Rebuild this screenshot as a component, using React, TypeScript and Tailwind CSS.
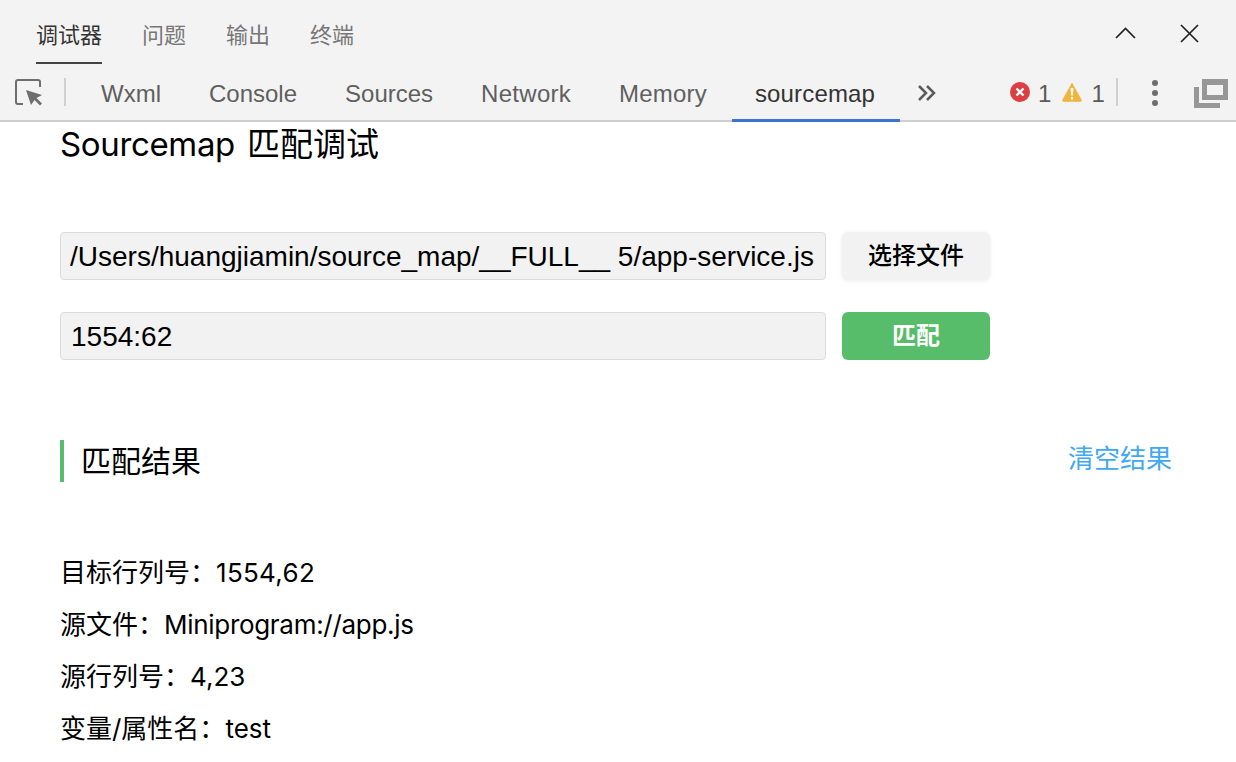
const sans = "font-['Liberation_Sans','Noto_Sans_CJK_SC',sans-serif]";
const pingfang = "font-['Inter','Noto_Sans_CJK_SC',sans-serif]";

const topTabs = ["调试器", "问题", "输出", "终端"];
const panelTabs = [
  { label: "Wxml", cls: "pr-[24px]" },
  { label: "Console", cls: "pr-[24px]" },
  { label: "Sources", cls: "pr-[24px]" },
  { label: "Network", cls: "pr-[24px] tracking-[0.28px]" },
  { label: "Memory", cls: "pr-[25px] tracking-[0.2px]" },
];
const results = [
  { label: "目标行列号：", value: "1554,62", cls: "tracking-[0.3px]" },
  { label: "源文件：", value: "Miniprogram://app.js", cls: "tracking-[-0.3px]" },
  { label: "源行列号：", value: "4,23", cls: "" },
  { label: "变量/属性名：", value: "test", cls: "" },
];

function InspectIcon() {
  return (
    <svg width="28" height="28" viewBox="0 0 28 28" fill="none">
      <path d="M8 26H3a2 2 0 0 1-2-2V4a2 2 0 0 1 2-2h20a2 2 0 0 1 2 2v5" stroke="#6e6e6e" strokeWidth="2" />
      <path d="M11 12L27 17L21.500 20L27 25.500L25 27.500L19.500 22L16 27z" fill="#6e6e6e" />
    </svg>
  );
}

function Toolbar() {
  return (
    <div className="flex h-[58px] items-stretch border-b-2 border-[#cfcfcf] pl-[15px]">
      <div className="flex w-[36px] items-center">
        <InspectIcon />
      </div>
      <div className="my-[14px] ml-[13px] mr-[11px] w-[2px] bg-[#d0d0d0]" />
      <div className="flex">
        {panelTabs.map((t) => (
          <div key={t.label} className={`flex items-center pl-[24px] pt-[4px] text-[24px] text-[#5f5f5f] ${t.cls}`}>
            {t.label}
          </div>
        ))}
        <div className="mb-[-2px] flex items-center border-b-[3px] border-[#3f73d0] pl-[23px] pr-[25px] pt-[5px] text-[24px] tracking-[0.15px] text-[#333]">
          sourcemap
        </div>
      </div>
      <div className="ml-[17px] flex items-center pt-[2px]">
        <svg width="20" height="20" viewBox="0 0 20 20" fill="none" stroke="#5a5a5a" strokeWidth="2.500">
          <path d="M2 3l7 7-7 7M10 3l7 7-7 7" />
        </svg>
      </div>
      <div className="ml-[73px] flex items-center text-[24px] text-[#5a5a5a]">
        <svg width="20" height="20" viewBox="0 0 20 20">
          <circle cx="10" cy="10" r="10" fill="#dc3f42" />
          <path d="M6.500 6.500l7 7M13.500 6.500l-7 7" stroke="#fff" strokeWidth="2.400" />
        </svg>
        <span className="ml-[8px] pt-[4px]">1</span>
        <svg className="ml-[11px]" width="20" height="20" viewBox="0 0 20 20">
          <path d="M10 1L19.500 18a1 1 0 0 1-1 1.500H1.500a1 1 0 0 1-1-1.500z" fill="#efb53c" stroke="#efb53c" strokeWidth="0.500" />
          <path d="M8.600 6h2.800l-.5 7.500H9.100zM8.900 15h2.200v2.400H8.900z" fill="#fff" />
        </svg>
        <span className="ml-[9px] pt-[4px]">1</span>
      </div>
      <div className="my-[14px] ml-[11px] w-[2px] bg-[#d0d0d0]" />
      <div className="ml-[34px] flex flex-col justify-center gap-[4px] pt-[2px]">
        <span className="h-[6px] w-[6px] rounded-full bg-[#6e6e6e]" />
        <span className="h-[6px] w-[6px] rounded-full bg-[#6e6e6e]" />
        <span className="h-[6px] w-[6px] rounded-full bg-[#6e6e6e]" />
      </div>
      <div className="ml-[36px] flex items-center pt-[2px]">
        <svg width="34" height="29" viewBox="0 0 34 29" fill="none">
          <path d="M8 0h26v21H8z M13 6v10h16V6z" fill="#979797" fillRule="evenodd" />
          <path d="M0 8h5v16h21v5H0z" fill="#979797" />
        </svg>
      </div>
    </div>
  );
}

export default function App() {
  return (
    <div className={`${sans} h-[762px] w-[1236px] overflow-hidden bg-white text-black`}>
      <div className="bg-[#f3f3f3]">
        <div className="flex h-[64px] items-stretch pl-[36px] pr-[36px]">
          <div className="flex gap-[40px] text-[22px]">
            {topTabs.map((t, i) => (
              <div
                key={t}
                className={
                  i === 0
                    ? "flex items-center border-b-2 border-[#444] pt-[8px] text-[#333]"
                    : "flex items-center border-b-2 border-transparent pt-[8px] text-[#777]"
                }
              >
                {t}
              </div>
            ))}
          </div>
          <div className="ml-auto flex gap-[43px] pt-[23px]">
            <svg width="21" height="21" viewBox="0 0 21 21" fill="none" stroke="#222" strokeWidth="1.700">
              <path d="M1 15L10.500 5.500 20 15" />
            </svg>
            <svg width="21" height="21" viewBox="0 0 21 21" fill="none" stroke="#222" strokeWidth="1.700">
              <path d="M2 2l17 17M19 2L2 19" />
            </svg>
          </div>
        </div>
        <Toolbar />
      </div>

      <div className="pl-[60px] pr-[64px]">
        <h1 className={`${pingfang} flex h-[44px] items-center text-[33px] leading-none`}>
          <span className="tracking-[-0.35px]">Sourcemap</span>
          <span className="ml-[12px]">匹配调试</span>
        </h1>

        <div className="mt-[66px] flex flex-col gap-[32px]">
          <div className="flex gap-[16px]">
            <div className="flex h-[48px] w-[766px] items-center rounded-[4px] border border-[#dcdcdc] bg-[#f2f2f2] pl-[9px] pt-[2px] text-[28px] whitespace-nowrap">
              /Users/huangjiamin/source_map/__FULL__ 5/app-service.js
            </div>
            <button className="h-[48px] w-[148px] rounded-[6px] bg-[#f2f2f2] text-[24px] font-medium text-black shadow-[0_1px_4px_rgba(0,0,0,0.08)]">
              选择文件
            </button>
          </div>
          <div className="flex gap-[16px]">
            <div className="flex h-[48px] w-[766px] items-center rounded-[4px] border border-[#dcdcdc] bg-[#f2f2f2] pl-[10px] pt-[2px] text-[28px]">
              1554:62
            </div>
            <button className="h-[48px] w-[148px] rounded-[6px] bg-[#57bd6a] text-[24px] font-bold text-white">
              匹配
            </button>
          </div>
        </div>

        <div className="mt-[80px] flex h-[42px] items-center justify-between">
          <div className="flex h-full items-center border-l-[4px] border-[#57bd6a] pl-[17px] text-[30px]">匹配结果</div>
          <a className="mb-[4px] text-[26px] text-[#40a9f3]">清空结果</a>
        </div>

        <div className={`${pingfang} mt-[65px] flex flex-col text-[26px] leading-[52px]`}>
          {results.map((r) => (
            <div key={r.label}>
              {r.label}
              <span className={r.cls}>{r.value}</span>
            </div>
          ))}
        </div>
      </div>
    </div>
  );
}
